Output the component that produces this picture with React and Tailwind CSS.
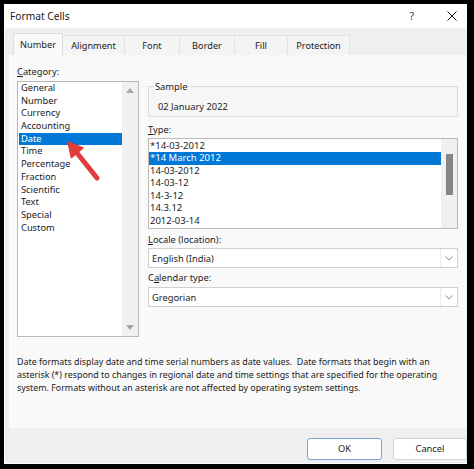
import React from "react";

const cats = ["General","Number","Currency","Accounting","Date","Time","Percentage","Fraction","Scientific","Text","Special","Custom"];
const types = ["*14-03-2012","*14 March 2012","14-03-2012","14-03-12","14-3-12","14.3.12","2012-03-14"];
const tabs = [["Number",50],["Alignment",62],["Font",55],["Border",55],["Fill",53],["Protection",62]];

function Chevron() {
  return (
    <svg width="8" height="5" viewBox="0 0 8 5" className="block">
      <path d="M0.5 0.5 L4 4 L7.5 0.5" fill="none" stroke="#8a8a8a" strokeWidth="1" />
    </svg>
  );
}

function Dropdown({ value }) {
  return (
    <div className="h-[20px] bg-white border border-[#cfcfcf] flex items-center">
      <span className="pl-[3px] text-[9.3px] leading-[13px] flex-1">{value}</span>
      <div className="w-[17px] h-full border-l border-[#ececec] flex items-center justify-center">
        <Chevron />
      </div>
    </div>
  );
}

export default function App() {
  return (
    <div className="relative w-[474px] h-[469px] bg-black pl-[4px] pt-[4px] font-['Noto_Sans',sans-serif] text-[#1b1b1b]">
      <div className="w-[463px] h-[460px] bg-[#efefef] border-l border-b border-white flex flex-col">
        {/* title bar */}
        <div className="h-[24px] shrink-0 bg-white flex items-center pb-[1px]">
          <span className="ml-[5px] text-[10.2px] leading-[14px]">Format Cells</span>
          <span className="ml-auto text-[10.5px] leading-[14px] text-[#333]">?</span>
          <svg width="10" height="10" viewBox="0 0 10 10" className="ml-[33px] mr-[10px]">
            <path d="M0.5 0.5 L9.5 9.5 M9.5 0.5 L0.5 9.5" stroke="#222" strokeWidth="1" />
          </svg>
        </div>
        {/* tabs */}
        <div className="mt-[5px] ml-[8px] flex h-[22px] shrink-0">
          {tabs.map(([t, w], i) => (
            <div
              key={t}
              style={{ width: w }}
              className={
                i === 0
                  ? "h-[22px] bg-[#f9f9f9] border-l border-t border-r border-[#dedede] flex items-center justify-center text-[9.2px]"
                  : "h-[20px] mt-[2px] bg-[#f4f4f4] border-r border-t border-[#e4e4e4] flex items-center justify-center text-[9.2px]"
              }
            >
              {t}
            </div>
          ))}
        </div>
        {/* panel */}
        <div className="ml-[4px] w-[457px] h-[373px] shrink-0 bg-[#f9f9f9] pl-[8px] pt-[10px]">
          <div className="grid grid-cols-[122px_310px] gap-x-[9px]">
            {/* left column */}
            <div className="flex flex-col">
              <div className="text-[9.3px] leading-[13px] h-[13px]"><span className="underline">C</span>ategory:</div>
              <div className="mt-[3px] h-[256px] bg-white border border-[#b8b8b8] flex">
                <div className="flex-1 pl-[1px]">
                  {cats.map((c) => (
                    <div
                      key={c}
                      className={
                        c === "Date"
                          ? "h-[12.7px] leading-[12.7px] text-[9.3px] pl-[2px] bg-[#0078d7] text-white"
                          : "h-[12.7px] leading-[12.7px] text-[9.3px] pl-[2px]"
                      }
                    >
                      {c}
                    </div>
                  ))}
                </div>
                <div className="w-[16px] bg-[#f0f0f0] flex flex-col items-center justify-between py-[6px]">
                  <svg width="8" height="5" viewBox="0 0 8 5"><path d="M0 5 L4 0 L8 5 Z" fill="#a6a6a6" /></svg>
                  <svg width="8" height="5" viewBox="0 0 8 5"><path d="M0 0 L4 5 L8 0 Z" fill="#a6a6a6" /></svg>
                </div>
              </div>
            </div>
            {/* right column */}
            <div className="flex flex-col">
              <div className="mt-[21px] relative h-[31px] border border-[#dcdcdc] bg-[#f6f6f6]">
                <span className="absolute left-[5px] top-[-7px] px-[1px] bg-[#f9f9f9] text-[9.3px] leading-[13px]">Sample</span>
                <div className="pl-[9px] pt-[13px] text-[9.3px] leading-[13px]">02 January 2022</div>
              </div>
              <div className="mt-[6px] h-[13px] text-[9.3px] leading-[13px]"><span className="underline">T</span>ype:</div>
              <div className="mt-[2px] h-[91px] bg-white border border-[#b8b8b8] flex">
                <div className="flex-1 pt-[0.5px]">
                  {types.map((t, i) => (
                    <div
                      key={t}
                      className={
                        i === 1
                          ? "h-[12.5px] leading-[12.5px] text-[9.5px] pl-[1px] bg-[#0078d7] text-white"
                          : "h-[12.5px] leading-[12.5px] text-[9.5px] pl-[1px]"
                      }
                    >
                      {t}
                    </div>
                  ))}
                </div>
                <div className="w-[16px] bg-[#f0f0f0] pt-[15px] flex justify-center">
                  <div className="w-[7px] h-[41px] bg-[#868686]" />
                </div>
              </div>
              <div className="mt-[4px] h-[13px] text-[9.3px] leading-[13px]"><span className="underline">L</span>ocale (location):</div>
              <div className="mt-[2px]"><Dropdown value="English (India)" /></div>
              <div className="mt-[3px] h-[13px] text-[9.3px] leading-[13px]">C<span className="underline">a</span>lendar type:</div>
              <div className="mt-[3px]"><Dropdown value="Gregorian" /></div>
            </div>
          </div>
          <div className="mt-[18px] text-[8.9px] leading-[13px] whitespace-nowrap">
            Date formats display date and time serial numbers as date values.&nbsp; Date formats that begin with an<br />
            asterisk (*) respond to changes in regional date and time settings that are specified for the operating<br />
            system. Formats without an asterisk are not affected by operating system settings.
          </div>
        </div>
        {/* buttons */}
        <div className="mt-[10px] flex justify-end gap-[11px]">
          <button className="w-[75px] h-[22px] bg-white border border-[#6fa4d8] rounded-[3px] text-[9.3px]">OK</button>
          <button className="w-[74px] h-[22px] bg-white border border-[#d5d5d5] rounded-l-[3px] text-[9.3px]">Cancel</button>
        </div>
      </div>
      {/* red annotation arrow */}
      <svg className="absolute left-0 top-0 pointer-events-none" width="474" height="469" viewBox="0 0 474 469">
        <line x1="97" y1="178" x2="77" y2="153" stroke="#e23b3b" strokeWidth="5" strokeLinecap="round" />
        <polygon points="68,142 83,148 71.4,157.6" fill="#e23b3b" stroke="#e23b3b" strokeWidth="1.5" strokeLinejoin="round" />
      </svg>
    </div>
  );
}
